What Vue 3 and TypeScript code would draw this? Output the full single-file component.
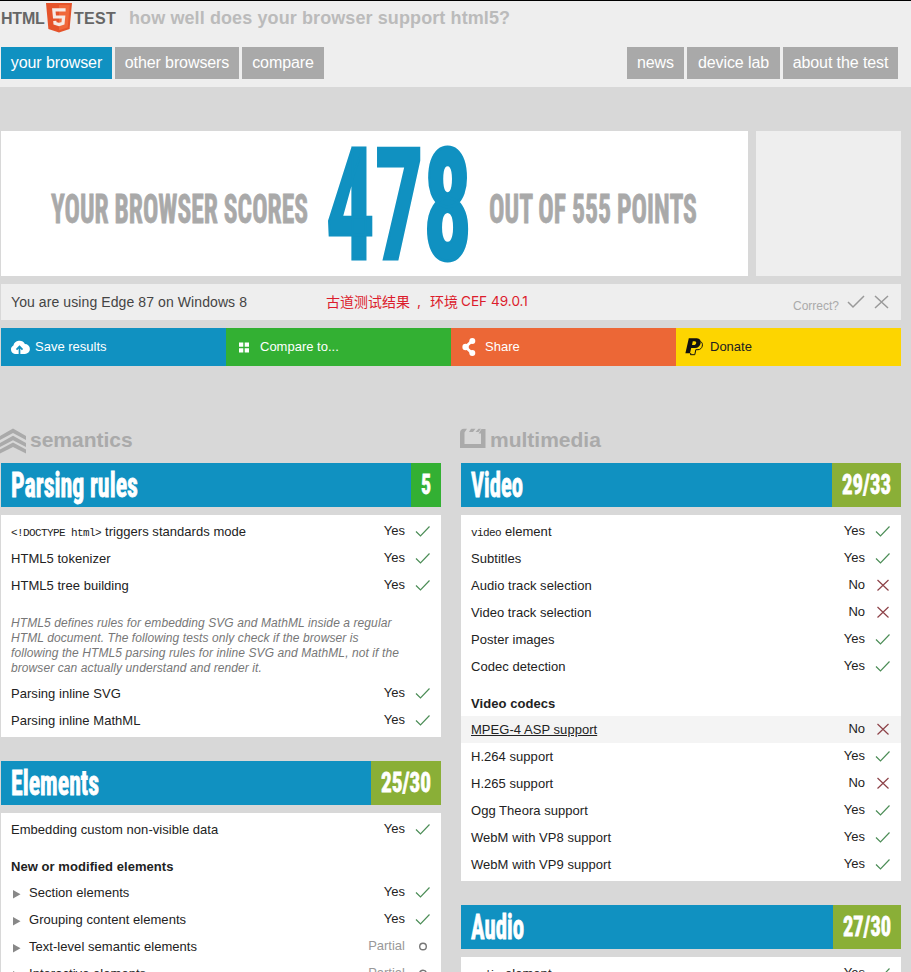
<script setup lang="ts">
type Result = 'yes' | 'no' | 'partial'

interface Row {
  kind: 'test' | 'group' | 'note'
  text: string
  code?: string
  result?: Result
  expandable?: boolean
  active?: boolean
}

interface Section {
  title: string
  titleWidth: number
  score: string
  scoreWidth: number
  full?: boolean
  rows: Row[]
}

interface Column {
  name: string
  sections: Section[]
}

const test = (text: string, result: Result, extra: Partial<Row> = {}): Row => ({ kind: 'test', text, result, ...extra })
const group = (text: string): Row => ({ kind: 'group', text })

const labels: Record<Result, string> = { yes: 'Yes', no: 'No', partial: 'Partial' }

const mainNav = [
  { text: 'your browser', size: 'w111', current: true },
  { text: 'other browsers', size: 'w124', current: false },
  { text: 'compare', size: 'w82', current: false },
]
const sideNav = [
  { text: 'news', size: 'w57' },
  { text: 'device lab', size: 'w93' },
  { text: 'about the test', size: 'w115' },
]

const columns: Column[] = [
  {
    name: 'semantics',
    sections: [
      {
        title: 'Parsing rules',
        titleWidth: 127,
        score: '5',
        scoreWidth: 10,
        full: true,
        rows: [
          test('triggers standards mode', 'yes', { code: '<!DOCTYPE html>' }),
          test('HTML5 tokenizer', 'yes'),
          test('HTML5 tree building', 'yes'),
          {
            kind: 'note',
            text: 'HTML5 defines rules for embedding SVG and MathML inside a regular\nHTML document. The following tests only check if the browser is\nfollowing the HTML5 parsing rules for inline SVG and MathML, not if the\nbrowser can actually understand and render it.',
          },
          test('Parsing inline SVG', 'yes'),
          test('Parsing inline MathML', 'yes'),
        ],
      },
      {
        title: 'Elements',
        titleWidth: 88,
        score: '25/30',
        scoreWidth: 50,
        rows: [
          test('Embedding custom non-visible data', 'yes'),
          group('New or modified elements'),
          test('Section elements', 'yes', { expandable: true }),
          test('Grouping content elements', 'yes', { expandable: true }),
          test('Text-level semantic elements', 'partial', { expandable: true }),
          test('Interactive elements', 'partial', { expandable: true }),
        ],
      },
    ],
  },
  {
    name: 'multimedia',
    sections: [
      {
        title: 'Video',
        titleWidth: 52,
        score: '29/33',
        scoreWidth: 49,
        rows: [
          test('element', 'yes', { code: 'video' }),
          test('Subtitles', 'yes'),
          test('Audio track selection', 'no'),
          test('Video track selection', 'no'),
          test('Poster images', 'yes'),
          test('Codec detection', 'yes'),
          group('Video codecs'),
          test('MPEG-4 ASP support', 'no', { active: true }),
          test('H.264 support', 'yes'),
          test('H.265 support', 'no'),
          test('Ogg Theora support', 'yes'),
          test('WebM with VP8 support', 'yes'),
          test('WebM with VP9 support', 'yes'),
        ],
      },
      {
        title: 'Audio',
        titleWidth: 53,
        score: '27/30',
        scoreWidth: 48,
        rows: [test('element', 'yes', { code: 'audio' })],
      },
    ],
  },
]
</script>

<template>
  <div class="page">
    <header class="top">
      <div class="brand">
        <span class="word html">HTML</span>
        <svg class="shield" width="26" height="30" viewBox="0 0 26 30">
          <path d="M0 0H26L23.6 26L13 29.5L2.4 26Z" fill="#e5532a" />
          <path d="M13 2H23.8L21.7 24.5L13 27.2Z" fill="#f0683a" />
          <path d="M19.6 6.8H7.8L8.5 14H17.6L17 20.3L13 21.6L9 20.3L8.8 17.8" fill="none" stroke="#f6eae5" stroke-width="3.2" />
        </svg>
        <span class="word test">TEST</span>
        <span class="tagline">how well does your browser support html5?</span>
      </div>
      <nav class="nav">
        <a v-for="n in mainNav" :key="n.text" :class="['tab', n.size, { current: n.current }]">{{ n.text }}</a>
        <span class="grow"></span>
        <a v-for="n in sideNav" :key="n.text" :class="['tab', n.size]">{{ n.text }}</a>
      </nav>
    </header>

    <main class="content">
      <div class="hero">
        <div class="score">
          <svg class="narrow" width="257" height="145">
            <text x="0" y="91.5" font-size="41.5" textLength="257" lengthAdjust="spacingAndGlyphs" class="muted">YOUR BROWSER SCORES</text>
          </svg>
          <svg class="narrow" width="146" height="145">
            <text x="0" y="128" font-size="156" textLength="146" lengthAdjust="spacingAndGlyphs" class="big">478</text>
          </svg>
          <svg class="narrow" width="208" height="145">
            <text x="0" y="91.5" font-size="41.5" textLength="208" lengthAdjust="spacingAndGlyphs" class="muted">OUT OF 555 POINTS</text>
          </svg>
        </div>
        <div class="side"></div>
      </div>

      <div class="using">
        <span class="agent">You are using Edge 87 on Windows 8</span>
        <span class="remark"><span class="han">古道测试结果</span><span class="comma">,</span><span class="han">环境</span><span class="cef">CEF 49.0.1</span></span>
        <span class="correct">Correct?</span>
        <svg class="vote" width="42" height="16" viewBox="0 0 42 16" fill="none" stroke="#999" stroke-width="1.5">
          <path d="M1 8L6 13L17 2M28 2L41 14M41 2L28 14" />
        </svg>
      </div>

      <div class="actions">
        <a class="action save">
          <svg width="20" height="16" viewBox="0 0 20 16">
            <path d="M5 15A4.6 4.6 0 0 1 3.4 6.4A6.2 6.2 0 0 1 14.9 5A5 5 0 0 1 14.9 15Z" fill="#fff" />
            <path d="M9.5 15V8.5M6.5 10.6L9.5 7.4L12.5 10.6" fill="none" stroke="#1091c1" stroke-width="1.7" />
          </svg><span>Save results</span></a>
        <a class="action compare">
          <svg width="20" height="16" viewBox="0 0 20 16" fill="#fff">
            <path d="M4 3.5H8.3V7.8H4ZM9.7 3.5H14V7.8H9.7ZM4 9.2H8.3V13.5H4ZM9.7 9.2H14V13.5H9.7Z" />
          </svg><span>Compare to...</span></a>
        <a class="action share">
          <svg width="20" height="20" viewBox="0 0 20 20" fill="#fff">
            <path d="M12 4L5.5 10L12 16" fill="none" stroke="#fff" stroke-width="2.8" />
            <circle cx="12.3" cy="4" r="3" /><circle cx="5.6" cy="10" r="3.2" /><circle cx="12.3" cy="16" r="3" />
          </svg><span>Share</span></a>
        <a class="action donate">
          <svg width="20" height="20" viewBox="0 0 20 20">
            <path d="M15.5 4.5C19 6 17.5 12.7 13 12.7H10.8L9.8 17.7H5.5L5.8 16" fill="none" stroke="#111" stroke-width="1" />
            <path fill-rule="evenodd" d="M3.8 1.2H11.8C18 1.2 16.5 11 10 11H6.2L5 16.2H0.4ZM7.8 4.2L7 8H8.8C11.6 8 12.2 4.2 9.6 4.2Z" fill="#111" />
          </svg><span>Donate</span></a>
      </div>

      <div class="columns">
        <section v-for="col in columns" :key="col.name" class="column">
          <h2 class="category">
            <svg v-if="col.name === 'semantics'" width="26" height="26" viewBox="0 0 26 26" fill="#aaa">
              <path d="M0 8L13 0.6L26 8V12L13 5L0 12ZM0 15L13 7.8L26 15V19L13 12.2L0 19ZM0 21.5L13 14.6L26 21.5V25.5L13 19L0 25.5Z" />
            </svg>
            <svg v-else width="26" height="26" viewBox="0 0 26 26" fill="#aaa">
              <path fill-rule="evenodd" d="M0 5Q0 1 4 .8H7L4.5 4.5V16H21V5.5H18.5L21.5 1H25.5V20H0ZM11 .8H15.5L13 4H9ZM18.5 .8H21L18.5 4H15.5Z" />
            </svg>
            <span>{{ col.name }}</span>
          </h2>
          <article v-for="s in col.sections" :key="s.title" class="block">
            <div class="bar">
              <svg class="title" width="140" height="44">
                <text class="narrow white" x="0" y="33.5" font-size="35" :textLength="s.titleWidth" lengthAdjust="spacingAndGlyphs">{{ s.title }}</text>
              </svg>
              <div :class="['badge', { full: s.full }]">
                <svg :width="s.scoreWidth" height="44">
                  <text class="narrow white" x="0" y="31" font-size="28.5" :textLength="s.scoreWidth" lengthAdjust="spacingAndGlyphs">{{ s.score }}</text>
                </svg>
              </div>
            </div>
            <div class="panel">
              <template v-for="r in s.rows" :key="r.text">
                <p v-if="r.kind === 'note'" class="note">{{ r.text }}</p>
                <h3 v-else-if="r.kind === 'group'" class="group">{{ r.text }}</h3>
                <div v-else :class="['row', { active: r.active }]">
                  <svg v-if="r.expandable" class="arrow" width="18" height="10" viewBox="0 0 18 10"><path d="M2 1L9.5 5.2L2 9.5Z" fill="#888" /></svg>
                  <span class="name"><code v-if="r.code">{{ r.code }}</code>{{ r.text }}</span>
                  <span :class="['result', r.result]">{{ labels[r.result!] }}</span>
                  <svg class="mark" width="16" height="14" viewBox="0 0 16 14" fill="none" stroke-width="1.2">
                    <path v-if="r.result === 'yes'" d="M1 7.5L5.5 12L14.5 2.5" stroke="#4c8d57" />
                    <path v-else-if="r.result === 'no'" d="M2.5 2L13.5 12.5M13.5 2L2.5 12.5" stroke="#8d4248" />
                    <circle v-else cx="8" cy="7.5" r="3.3" stroke="#777" stroke-width="1.4" />
                  </svg>
                </div>
              </template>
            </div>
          </article>
        </section>
      </div>
    </main>
  </div>
</template>

<style>
html,
body {
  margin: 0;
  background: #d8d8d8;
  overflow: hidden;
}
</style>

<style scoped>
.page {
  box-sizing: border-box;
  height: 972px;
  overflow: hidden;
  background: #d8d8d8;
  font-family: "Liberation Sans", Arial, sans-serif;
  font-size: 13px;
  color: #222;
}
svg {
  flex: none;
  overflow: visible;
}
.top {
  box-sizing: border-box;
  height: 87px;
  background: #eee;
  border-top: 1px solid #000;
}
.brand {
  display: flex;
  height: 46px;
  padding-left: 1px;
}
.word {
  font-size: 16px;
  font-weight: bold;
  line-height: 20px;
  padding-top: 8px;
  color: #666;
}
.html {
  width: 45px;
  letter-spacing: -0.2px;
}
.test {
  width: 55px;
  padding-left: 2px;
  letter-spacing: 0.3px;
}
.shield {
  margin-top: 2px;
}
.tagline {
  font-size: 18px;
  font-weight: bold;
  line-height: 20px;
  padding-top: 7px;
  letter-spacing: 0.1px;
  color: #bbb;
}
.nav {
  display: flex;
  gap: 3px;
  padding: 0 13px 0 1px;
}
.grow {
  flex: 1;
}
.tab {
  box-sizing: border-box;
  height: 32px;
  line-height: 32px;
  font-size: 16px;
  letter-spacing: -0.1px;
  text-align: center;
  white-space: nowrap;
  color: #fff;
  background: #a9a9a9;
}
.current {
  background: #1091c1;
}
.w111 { width: 111px; }
.w124 { width: 124px; }
.w82 { width: 82px; }
.w57 { width: 57px; }
.w93 { width: 93px; }
.w115 { width: 115px; }
.content {
  padding: 44px 0 0 1px;
  width: 900px;
}
.hero {
  display: flex;
  gap: 8px;
  height: 145px;
}
.score {
  box-sizing: border-box;
  display: flex;
  gap: 17.5px;
  width: 747px;
  padding-left: 50px;
  background: #fff;
}
.side {
  flex: 1;
  background: #eee;
}
.narrow {
  font-family: Roboto, "Liberation Sans Narrow", sans-serif;
  font-weight: bold;
  font-stretch: 75%;
}
.muted {
  fill: #a9a9a9;
  stroke: #a9a9a9;
  stroke-width: 0.8px;
}
.big {
  fill: #1091c1;
  stroke: #1091c1;
  stroke-width: 3px;
}
.white {
  fill: #fff;
  stroke: #fff;
  stroke-width: 0.8px;
}
.using {
  display: flex;
  align-items: center;
  height: 36px;
  margin-top: 8px;
  padding: 0 12px 0 10px;
  background: #eee;
}
.agent {
  width: 315px;
  font-size: 14px;
  letter-spacing: 0.09px;
  color: #444;
}
.remark {
  display: flex;
  flex: 1;
  font-family: Inter, "Noto Sans CJK SC", sans-serif;
  font-size: 14px;
  line-height: 20px;
  margin-top: -3px;
  color: #dc1c2c;
}
.han {
  font-family: "Noto Sans CJK SC", sans-serif;
}
.comma {
  width: 13px;
  padding-left: 7px;
}
.cef {
  padding-left: 3px;
  font-size: 13.6px;
}
.correct {
  font-size: 12px;
  margin: 8px 8px 0 0;
  color: #aaa;
}
.actions {
  display: flex;
  margin-top: 8px;
  height: 38px;
}
.action {
  display: flex;
  flex: 1;
  align-items: center;
  gap: 5px;
  padding: 0 0 0 9px;
  color: #fff;
}
.action span {
  padding-bottom: 2px;
}
.save { background: #1091c1; }
.compare { background: #33b033; }
.share { background: #ec6736; }
.donate { background: #fdd500; color: #222; }
.columns {
  display: flex;
  gap: 20px;
  margin-top: 62px;
}
.column {
  width: 440px;
}
.category {
  display: flex;
  gap: 4px;
  height: 35px;
  margin: 0 0 0 -1px;
  font-size: 21px;
  line-height: 24px;
  color: #aaa;
}
.bar {
  display: flex;
  justify-content: space-between;
  height: 44px;
  padding-left: 10px;
  background: #1091c1;
}
.badge {
  padding: 0 10px;
  background: #8aaf37;
}
.full {
  background: #33b033;
}
.panel {
  margin: 8px 0 24px;
  padding: 3px 0;
  background: #fff;
}
.row {
  box-sizing: border-box;
  display: flex;
  align-items: center;
  height: 27px;
  padding: 0 10px 2px;
}
.active {
  background: #f4f4f4;
}
.active .name {
  text-decoration: underline;
}
.name {
  flex: 1;
  padding-top: 1px;
  letter-spacing: 0.04px;
}
code {
  font-family: "Liberation Mono", monospace;
  font-size: 11px;
  letter-spacing: -0.6px;
  margin-right: 4px;
}
.arrow {
  margin-top: 5px;
}
.result {
  margin-right: 10px;
}
.partial {
  color: #999;
}
.group {
  margin: 0;
  height: 26px;
  padding: 10px 10px 0;
  font-size: 13px;
  line-height: 27px;
  letter-spacing: 0.06px;
}
.note {
  margin: 17px 10px 4px;
  font-size: 12px;
  line-height: 15px;
  font-style: italic;
  letter-spacing: 0.09px;
  white-space: pre;
  color: #777;
}
</style>
